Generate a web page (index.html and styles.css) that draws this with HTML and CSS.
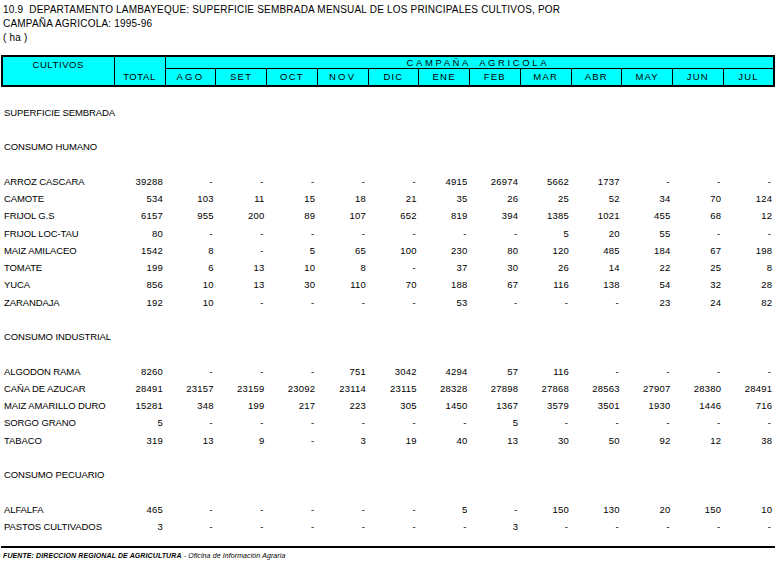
FILE: index.html
```html
<!DOCTYPE html>
<html lang="es">
<head>
<meta charset="utf-8">
<title>10.9 Departamento Lambayeque</title>
<link rel="stylesheet" href="styles.css">
</head>
<body>
<div class="page">
  <div class="title">
    <div class="tline">10.9&nbsp; DEPARTAMENTO LAMBAYEQUE: SUPERFICIE SEMBRADA MENSUAL DE LOS PRINCIPALES CULTIVOS, POR</div>
    <div class="tline">CAMPAÑA AGRICOLA: 1995-96</div>
    <div class="tline">( ha )</div>
  </div>
  <table class="grid">
    <colgroup>
      <col class="c-name"><col class="c-tot">
      <col class="c-m"><col class="c-m"><col class="c-m"><col class="c-m"><col class="c-m"><col class="c-m">
      <col class="c-m"><col class="c-m"><col class="c-m"><col class="c-m"><col class="c-m"><col class="c-m">
    </colgroup>
    <thead>
      <tr class="h1">
        <th rowspan="2" class="th-cult">CULTIVOS</th>
        <th rowspan="2" class="th-tot">TOTAL</th>
        <th colspan="12" class="th-camp">CAMPAÑA AGRICOLA</th>
      </tr>
      <tr class="h2">
        <th class="sp">AGO</th><th>SET</th><th>OCT</th><th class="sp">NOV</th><th>DIC</th><th>ENE</th>
        <th>FEB</th><th>MAR</th><th>ABR</th><th>MAY</th><th>JUN</th><th>JUL</th>
      </tr>
    </thead>
    <tbody>
      <tr><td colspan="14"></td></tr>
      <tr><td class="n" colspan="14">SUPERFICIE SEMBRADA</td></tr>
      <tr><td colspan="14"></td></tr>
      <tr><td class="n" colspan="14">CONSUMO HUMANO</td></tr>
      <tr><td colspan="14"></td></tr>
      <tr><td class="n">ARROZ CASCARA</td><td>39288</td><td class="d">-</td><td class="d">-</td><td class="d">-</td><td class="d">-</td><td class="d">-</td><td>4915</td><td>26974</td><td>5662</td><td>1737</td><td class="d">-</td><td class="d">-</td><td class="d">-</td></tr>
      <tr><td class="n">CAMOTE</td><td>534</td><td>103</td><td>11</td><td>15</td><td>18</td><td>21</td><td>35</td><td>26</td><td>25</td><td>52</td><td>34</td><td>70</td><td>124</td></tr>
      <tr><td class="n">FRIJOL G.S</td><td>6157</td><td>955</td><td>200</td><td>89</td><td>107</td><td>652</td><td>819</td><td>394</td><td>1385</td><td>1021</td><td>455</td><td>68</td><td>12</td></tr>
      <tr><td class="n">FRIJOL LOC-TAU</td><td>80</td><td class="d">-</td><td class="d">-</td><td class="d">-</td><td class="d">-</td><td class="d">-</td><td class="d">-</td><td class="d">-</td><td>5</td><td>20</td><td>55</td><td class="d">-</td><td class="d">-</td></tr>
      <tr><td class="n">MAIZ AMILACEO</td><td>1542</td><td>8</td><td class="d">-</td><td>5</td><td>65</td><td>100</td><td>230</td><td>80</td><td>120</td><td>485</td><td>184</td><td>67</td><td>198</td></tr>
      <tr><td class="n">TOMATE</td><td>199</td><td>6</td><td>13</td><td>10</td><td>8</td><td class="d">-</td><td>37</td><td>30</td><td>26</td><td>14</td><td>22</td><td>25</td><td>8</td></tr>
      <tr><td class="n">YUCA</td><td>856</td><td>10</td><td>13</td><td>30</td><td>110</td><td>70</td><td>188</td><td>67</td><td>116</td><td>138</td><td>54</td><td>32</td><td>28</td></tr>
      <tr><td class="n">ZARANDAJA</td><td>192</td><td>10</td><td class="d">-</td><td class="d">-</td><td class="d">-</td><td class="d">-</td><td>53</td><td class="d">-</td><td class="d">-</td><td class="d">-</td><td>23</td><td>24</td><td>82</td></tr>
      <tr><td colspan="14"></td></tr>
      <tr><td class="n" colspan="14">CONSUMO INDUSTRIAL</td></tr>
      <tr><td colspan="14"></td></tr>
      <tr><td class="n">ALGODON RAMA</td><td>8260</td><td class="d">-</td><td class="d">-</td><td class="d">-</td><td>751</td><td>3042</td><td>4294</td><td>57</td><td>116</td><td class="d">-</td><td class="d">-</td><td class="d">-</td><td class="d">-</td></tr>
      <tr><td class="n">CAÑA DE AZUCAR</td><td>28491</td><td>23157</td><td>23159</td><td>23092</td><td>23114</td><td>23115</td><td>28328</td><td>27898</td><td>27868</td><td>28563</td><td>27907</td><td>28380</td><td>28491</td></tr>
      <tr><td class="n">MAIZ AMARILLO DURO</td><td>15281</td><td>348</td><td>199</td><td>217</td><td>223</td><td>305</td><td>1450</td><td>1367</td><td>3579</td><td>3501</td><td>1930</td><td>1446</td><td>716</td></tr>
      <tr><td class="n">SORGO GRANO</td><td>5</td><td class="d">-</td><td class="d">-</td><td class="d">-</td><td class="d">-</td><td class="d">-</td><td class="d">-</td><td>5</td><td class="d">-</td><td class="d">-</td><td class="d">-</td><td class="d">-</td><td class="d">-</td></tr>
      <tr><td class="n">TABACO</td><td>319</td><td>13</td><td>9</td><td class="d">-</td><td>3</td><td>19</td><td>40</td><td>13</td><td>30</td><td>50</td><td>92</td><td>12</td><td>38</td></tr>
      <tr><td colspan="14"></td></tr>
      <tr><td class="n" colspan="14">CONSUMO PECUARIO</td></tr>
      <tr><td colspan="14"></td></tr>
      <tr><td class="n">ALFALFA</td><td>465</td><td class="d">-</td><td class="d">-</td><td class="d">-</td><td class="d">-</td><td class="d">-</td><td>5</td><td class="d">-</td><td>150</td><td>130</td><td>20</td><td>150</td><td>10</td></tr>
      <tr><td class="n">PASTOS CULTIVADOS</td><td>3</td><td class="d">-</td><td class="d">-</td><td class="d">-</td><td class="d">-</td><td class="d">-</td><td class="d">-</td><td>3</td><td class="d">-</td><td class="d">-</td><td class="d">-</td><td class="d">-</td><td class="d">-</td></tr>
    </tbody>
  </table>
  <div class="foot">
    <span class="src">FUENTE: DIRECCION REGIONAL DE AGRICULTURA</span> - <span class="off">Oficina de Información Agraria</span>
  </div>
</div>
</body>
</html>
```

FILE: styles.css
```css
html, body {
  margin: 0;
  padding: 0;
  background: #ffffff;
}

.page {
  width: 775px;
  padding-left: 1px;
  font-family: "Liberation Sans", Arial, sans-serif;
  color: #000000;
}

.title {
  padding: 3px 0 0 2px;
  height: 55px;
  box-sizing: border-box;
}

.tline {
  font-size: 10px;
  line-height: 14px;
  height: 14px;
  white-space: nowrap;
  letter-spacing: 0.2px;
}

.grid {
  border-collapse: collapse;
  table-layout: fixed;
  width: 773px;
  font-size: 9.5px;
}

.c-name { width: 112px; }
.c-tot { width: 51px; }
.c-m { width: 50.75px; }

.grid th {
  background: #00ffff;
  font-weight: normal;
  border: 1px solid #000000;
  padding: 0;
  text-align: center;
  letter-spacing: 1.2px;
}

.grid thead {
  border: 2px solid #000000;
}

.h1 { height: 12px; }
.h2 { height: 17px; }

.grid th.th-cult {
  vertical-align: top;
  line-height: 11px;
  padding-top: 2px;
  letter-spacing: 0.6px;
}

.grid th.th-tot {
  vertical-align: bottom;
  padding-bottom: 3px;
  letter-spacing: 0.6px;
}

.grid th.th-camp {
  line-height: 11px;
  letter-spacing: 2.6px;
  word-spacing: 4px;
  text-align: left;
  padding-left: 241px;
}

.h2 th {
  line-height: 15px;
}

.grid .h2 th.sp {
  letter-spacing: 2.2px;
}

.grid td {
  height: 17.25px;
  padding: 0 2px 0 0;
  text-align: right;
  white-space: nowrap;
  line-height: 17px;
  letter-spacing: 0.2px;
}

.grid td.n {
  text-align: left;
  padding: 0 0 0 2px;
  letter-spacing: -0.1px;
}

.grid td.d {
  padding-right: 3px;
}

.foot {
  margin-top: 11px;
  border-top: 2px solid #000000;
  width: 773px;
  padding: 3px 0 0 2px;
  font-size: 7px;
  line-height: 9px;
  font-style: italic;
  white-space: nowrap;
  letter-spacing: 0.1px;
}

.src {
  font-weight: bold;
}
```
